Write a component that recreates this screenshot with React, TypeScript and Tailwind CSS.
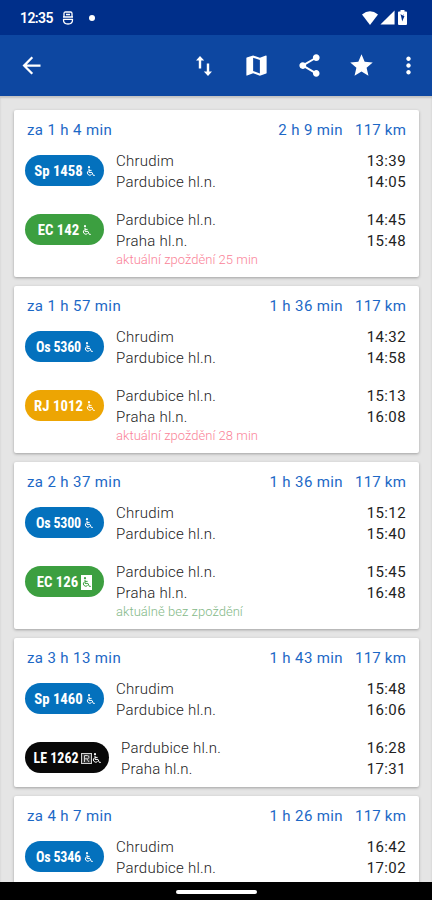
import {
  MdArrowBack,
  MdMap,
  MdMoreVert,
  MdShare,
  MdSignalCellular4Bar,
  MdStar,
} from 'react-icons/md';

type Leg = {
  train: string;
  color: string;
  icons?: 'wheelchair' | 'boxed' | 'reserved';
  pill?: string;
  label?: string;
  from: string;
  to: string;
  departure: string;
  arrival: string;
  note?: string;
  noteColor?: string;
};

type Connection = {
  leaves: string;
  duration: string;
  distance: string;
  height: string;
  legs: Leg[];
};

const BLUE = 'bg-[#0471bd]';
const GREEN = 'bg-[#3c9f40]';
const LATE = 'text-[#fa8398]';
const NARROW = 'text-[14px] tracking-[-0.2px]';

const connections: Connection[] = [
  {
    leaves: 'za 1 h 4 min',
    duration: '2 h 9 min',
    distance: '117 km',
    height: 'h-[167px]',
    legs: [
      { train: 'Sp 1458', color: BLUE, from: 'Chrudim', to: 'Pardubice hl.n.', departure: '13:39', arrival: '14:05' },
      { train: 'EC 142', color: GREEN, from: 'Pardubice hl.n.', to: 'Praha hl.n.', departure: '14:45', arrival: '15:48', note: 'aktuální zpoždění 25 min', noteColor: LATE },
    ],
  },
  {
    leaves: 'za 1 h 57 min',
    duration: '1 h 36 min',
    distance: '117 km',
    height: 'h-[167px]',
    legs: [
      { train: 'Os 5360', color: BLUE, label: NARROW, from: 'Chrudim', to: 'Pardubice hl.n.', departure: '14:32', arrival: '14:58' },
      { train: 'RJ 1012', color: 'bg-[#eda503]', from: 'Pardubice hl.n.', to: 'Praha hl.n.', departure: '15:13', arrival: '16:08', note: 'aktuální zpoždění 28 min', noteColor: LATE },
    ],
  },
  {
    leaves: 'za 2 h 37 min',
    duration: '1 h 36 min',
    distance: '117 km',
    height: 'h-[167px]',
    legs: [
      { train: 'Os 5300', color: BLUE, label: NARROW, from: 'Chrudim', to: 'Pardubice hl.n.', departure: '15:12', arrival: '15:40' },
      { train: 'EC 126', color: GREEN, icons: 'boxed', from: 'Pardubice hl.n.', to: 'Praha hl.n.', departure: '15:45', arrival: '16:48', note: 'aktuálně bez zpoždění', noteColor: 'text-[#84b988]' },
    ],
  },
  {
    leaves: 'za 3 h 13 min',
    duration: '1 h 43 min',
    distance: '117 km',
    height: 'h-[149px]',
    legs: [
      { train: 'Sp 1460', color: BLUE, from: 'Chrudim', to: 'Pardubice hl.n.', departure: '15:48', arrival: '16:06' },
      { train: 'LE 1262', color: 'bg-[#080808]', icons: 'reserved', pill: 'w-[84px]', label: 'text-[14px]', from: 'Pardubice hl.n.', to: 'Praha hl.n.', departure: '16:28', arrival: '17:31' },
    ],
  },
  {
    leaves: 'za 4 h 7 min',
    duration: '1 h 26 min',
    distance: '117 km',
    height: 'h-[167px]',
    legs: [
      { train: 'Os 5346', color: BLUE, label: NARROW, from: 'Chrudim', to: 'Pardubice hl.n.', departure: '16:42', arrival: '17:02' },
    ],
  },
];

function Wheelchair() {
  return (
    <svg viewBox="0 0 9 11" className="w-[9px] h-[11px]" fill="none" stroke="currentColor" strokeWidth="1">
      <circle cx="3" cy="1.2" r="1.1" fill="currentColor" stroke="none" />
      <path d="M3 2.8V6.4H6L7.3 9.4H8.8M3 4.4H5.6" />
      <path d="M2 5.2A2.4 2.4 0 1 0 5.6 8.4" />
    </svg>
  );
}

function TrainIcons({ kind }: { kind: Leg['icons'] }) {
  if (kind === 'boxed') {
    return (
      <span className="flex w-[11px] h-[15px] items-center justify-center bg-white text-[#3c9f40]">
        <Wheelchair />
      </span>
    );
  }
  if (kind === 'reserved') {
    return (
      <span className="-ml-px flex items-center">
        <svg viewBox="0 0 11 11" className="w-[11px] h-[11px]" fill="#3a3a3a" stroke="#d4d4d4" strokeWidth="1">
          <rect x="0.5" y="0.5" width="10" height="10" />
          <path fill="none" d="M3.5 9V2.5H6.3A1.6 1.6 0 0 1 6.3 5.8H3.5M5.8 5.8L8 9" />
        </svg>
        <Wheelchair />
      </span>
    );
  }
  return <Wheelchair />;
}

function LegRow({ leg }: { leg: Leg }) {
  return (
    <div className="flex h-[59px] items-start">
      <div className={`mt-[5px] flex h-[31px] shrink-0 items-center justify-center gap-[3px] rounded-full pt-px text-white ${leg.pill ?? 'w-[79px]'} ${leg.color}`}>
        <span className={`font-bold whitespace-nowrap [font-stretch:75%] ${leg.label ?? 'text-[14.8px]'}`}>{leg.train}</span>
        <TrainIcons kind={leg.icons} />
      </div>
      <div className="ml-3 flex-1 pt-px text-[15px] leading-[21px] font-light tracking-[0.24px] text-[#222]">
        <div className="flex justify-between">
          <span>{leg.from}</span>
          <span className="font-normal tracking-[0.4px]">{leg.departure}</span>
        </div>
        <div className="flex justify-between">
          <span>{leg.to}</span>
          <span className="font-normal tracking-[0.4px]">{leg.arrival}</span>
        </div>
        {leg.note && <div className={`-mt-px text-[13px] leading-[17px] tracking-[0.04px] ${leg.noteColor}`}>{leg.note}</div>}
      </div>
    </div>
  );
}

function ConnectionCard({ item }: { item: Connection }) {
  return (
    <section className={`shrink-0 rounded-[2px] bg-white pt-[10px] pr-[13px] pl-[11px] shadow-[0_1px_3px_rgba(0,0,0,0.3)] ${item.height}`}>
      <div className="mb-[10px] flex h-5 items-center pt-px pl-[2px] text-[15px] tracking-[0.38px] text-[#1c68c6]">
        <span>{item.leaves}</span>
        <span className="ml-auto">{item.duration}</span>
        <span className="ml-3 tracking-[0.2px]">{item.distance}</span>
      </div>
      {item.legs.map((leg) => (
        <LegRow key={leg.train} leg={leg} />
      ))}
    </section>
  );
}

function StatusBar() {
  return (
    <div className="flex h-[35px] shrink-0 items-center bg-[#002f8a] pl-5 pr-[25px] text-white">
      <span className="w-[33px] pt-px text-[14px] font-semibold tracking-[-0.6px]">12:35</span>
      <svg viewBox="0 0 12 14" className="ml-[9px] h-[14px] w-3" fill="none" stroke="currentColor" strokeWidth="1.3">
        <path d="M2 6V2.5Q2 1 3.5 1H8.5Q10 1 10 2.5V6M4 3.5H8M1 6H11M1 8.3H11M1.5 8.3V9Q1.5 13 6 13T10.5 9V8.3" />
      </svg>
      <span className="ml-[15px] h-[6px] w-[6px] rounded-full bg-white" />
      <svg viewBox="0 0 16 14" className="ml-auto h-[14px] w-4" fill="currentColor">
        <path d="M0 3.5Q8-3 16 3.5L8 14Z" />
      </svg>
      <MdSignalCellular4Bar className="ml-px h-[17px] w-[17px]" />
      <svg viewBox="0 0 9 15" className="ml-[2px] h-[15px] w-[9px]" fill="currentColor">
        <path fillRule="evenodd" d="M2.5 0H6.5V1.5H8Q9 1.5 9 2.5V14Q9 15 8 15H1Q0 15 0 14V2.5Q0 1.5 1 1.5H2.5ZM2.5 4L3.5 8L4.2 11.5L6.5 6H5.2L6 4L4.5 5.5Z" />
      </svg>
    </div>
  );
}

function Toolbar() {
  return (
    <header className="flex h-[61px] shrink-0 items-center bg-[#0d47a1] pl-[18px] pr-[10px] text-white">
      <MdArrowBack size={27} />
      <svg viewBox="0 0 16 22" className="ml-auto h-[22px] w-4" fill="currentColor">
        <path d="M4 1L8.2 5.5H5.2V13.5H2.8V5.5H0ZM12 21L7.8 16.5H10.8V8.5H13.2V16.5H16Z" />
      </svg>
      <MdMap size={27} className="ml-[31px]" />
      <MdShare size={27} className="ml-[26px]" />
      <MdStar size={27} className="ml-[25px]" />
      <MdMoreVert size={27} className="ml-[20px]" />
    </header>
  );
}

export default function App() {
  return (
    <div className="flex h-[900px] w-[432px] flex-col overflow-hidden bg-[#e5e5e5] font-['Roboto',sans-serif]">
      <StatusBar />
      <Toolbar />
      <main className="flex min-h-0 flex-1 flex-col gap-[9px] overflow-hidden pt-[14px] pr-[13px] pl-[14px] shadow-[inset_0_2px_2px_rgba(0,0,0,0.15)]">
        {connections.map((item) => (
          <ConnectionCard key={item.leaves} item={item} />
        ))}
      </main>
      <div className="flex h-[18px] shrink-0 justify-center bg-black pt-[8px]">
        <div className="h-1 w-[81px] rounded-full bg-white" />
      </div>
    </div>
  );
}
